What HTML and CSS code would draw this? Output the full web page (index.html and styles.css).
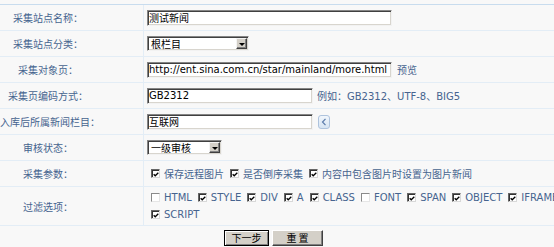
FILE: index.html
```html
<!DOCTYPE html>
<html lang="zh-CN">
<head>
<meta charset="utf-8">
<title>采集设置</title>
<link rel="stylesheet" href="styles.css">
</head>
<body>
<div class="form">
  <div class="row">
    <div class="label"><span>采集站点名称：</span></div>
    <div class="field"><input class="input w-long" type="text" value="测试新闻"></div>
  </div>
  <div class="row">
    <div class="label"><span>采集站点分类：</span></div>
    <div class="field"><span class="select w-sel1"><span class="sel-text">根栏目</span><span class="arrow"><span class="tri"></span></span></span></div>
  </div>
  <div class="row">
    <div class="label"><span>采集对象页：</span></div>
    <div class="field"><input class="input w-long" type="text" value="http://ent.sina.com.cn/star/mainland/more.html"><a class="link" href="#">预览</a></div>
  </div>
  <div class="row">
    <div class="label"><span>采集页编码方式：</span></div>
    <div class="field"><input class="input w-short" type="text" value="GB2312"><span class="hint">例如：GB2312、UTF-8、BIG5</span></div>
  </div>
  <div class="row">
    <div class="label"><span>入库后所属新闻栏目：</span></div>
    <div class="field"><input class="input w-short" type="text" value="互联网"><span class="back"><svg width="6" height="8" viewBox="0 0 6 8"><path d="M4.5 0.8 L1.5 4 L4.5 7.2" fill="none" stroke="#5b7bab" stroke-width="1.2"/></svg></span></div>
  </div>
  <div class="row">
    <div class="label"><span>审核状态：</span></div>
    <div class="field"><span class="select w-sel2"><span class="sel-text">一级审核</span><span class="arrow"><span class="tri"></span></span></span></div>
  </div>
  <div class="row">
    <div class="label"><span>采集参数：</span></div>
    <div class="field">
      <div class="checks">
        <span class="opt"><span class="cb on"><svg width="7" height="7" viewBox="0 0 7 7"><path d="M0.8 3.2 L2.6 5 L6.2 1.4" fill="none" stroke="#000" stroke-width="1.5"/></svg></span>保存远程图片</span>
        <span class="opt"><span class="cb on"><svg width="7" height="7" viewBox="0 0 7 7"><path d="M0.8 3.2 L2.6 5 L6.2 1.4" fill="none" stroke="#000" stroke-width="1.5"/></svg></span>是否倒序采集</span>
        <span class="opt"><span class="cb on"><svg width="7" height="7" viewBox="0 0 7 7"><path d="M0.8 3.2 L2.6 5 L6.2 1.4" fill="none" stroke="#000" stroke-width="1.5"/></svg></span>内容中包含图片时设置为图片新闻</span>
      </div>
    </div>
  </div>
  <div class="row row-tall">
    <div class="label"><span>过滤选项：</span></div>
    <div class="field">
      <div class="checks wrap">
        <span class="opt"><span class="cb"></span>HTML</span>
        <span class="opt"><span class="cb on"><svg width="7" height="7" viewBox="0 0 7 7"><path d="M0.8 3.2 L2.6 5 L6.2 1.4" fill="none" stroke="#000" stroke-width="1.5"/></svg></span>STYLE</span>
        <span class="opt"><span class="cb on"><svg width="7" height="7" viewBox="0 0 7 7"><path d="M0.8 3.2 L2.6 5 L6.2 1.4" fill="none" stroke="#000" stroke-width="1.5"/></svg></span>DIV</span>
        <span class="opt"><span class="cb on"><svg width="7" height="7" viewBox="0 0 7 7"><path d="M0.8 3.2 L2.6 5 L6.2 1.4" fill="none" stroke="#000" stroke-width="1.5"/></svg></span>A</span>
        <span class="opt"><span class="cb on"><svg width="7" height="7" viewBox="0 0 7 7"><path d="M0.8 3.2 L2.6 5 L6.2 1.4" fill="none" stroke="#000" stroke-width="1.5"/></svg></span>CLASS</span>
        <span class="opt"><span class="cb"></span>FONT</span>
        <span class="opt"><span class="cb on"><svg width="7" height="7" viewBox="0 0 7 7"><path d="M0.8 3.2 L2.6 5 L6.2 1.4" fill="none" stroke="#000" stroke-width="1.5"/></svg></span>SPAN</span>
        <span class="opt"><span class="cb on"><svg width="7" height="7" viewBox="0 0 7 7"><path d="M0.8 3.2 L2.6 5 L6.2 1.4" fill="none" stroke="#000" stroke-width="1.5"/></svg></span>OBJECT</span>
        <span class="opt"><span class="cb on"><svg width="7" height="7" viewBox="0 0 7 7"><path d="M0.8 3.2 L2.6 5 L6.2 1.4" fill="none" stroke="#000" stroke-width="1.5"/></svg></span>IFRAME</span>
        <span class="opt"><span class="cb on"><svg width="7" height="7" viewBox="0 0 7 7"><path d="M0.8 3.2 L2.6 5 L6.2 1.4" fill="none" stroke="#000" stroke-width="1.5"/></svg></span>SCRIPT</span>
      </div>
    </div>
  </div>
</div>
<div class="actions">
  <button class="btn btn-default w-next" type="button">下一步</button>
  <button class="btn w-reset" type="button">重 置</button>
</div>
</body>
</html>
```
FILE: styles.css
```css
html, body {
  margin: 0;
  padding: 0;
  overflow: hidden;
}
body {
  width: 554px;
  height: 247px;
  background: #f8f8f8;
  font-family: "DejaVu Sans", "Noto Sans CJK SC", sans-serif;
  font-size: 10px;
  color: #46648f;
}
.form {
  margin-top: 4px;
  border-top: 1px solid #c8dcee;
}
.row {
  display: grid;
  grid-template-columns: 144px minmax(0, 1fr);
  height: 25px;
  border-bottom: 1px solid #e3edf6;
}
.row-tall {
  height: 38px;
}
.label {
  border-right: 1px solid #e3edf6;
  padding-right: 47px;
  display: flex;
  align-items: center;
  white-space: nowrap;
}
.label span {
  display: block;
  width: 100%;
  text-align: center;
}
.field {
  display: flex;
  align-items: center;
  gap: 4px;
  padding-left: 3px;
  white-space: nowrap;
}
.input {
  box-sizing: border-box;
  height: 16px;
  margin: 0;
  padding: 0 1px;
  border: 1px solid;
  border-color: #858585 #f2f2f2 #f2f2f2 #858585;
  box-shadow: inset 1px 1px 0 #404040, inset -1px -1px 0 #d8d5ce;
  background: #fff;
  font: inherit;
  font-size: 10px;
  color: #000;
  outline: none;
}
.w-long { width: 245px; }
.w-short { width: 166px; }
.select {
  box-sizing: border-box;
  height: 15px;
  display: inline-flex;
  align-items: center;
  justify-content: space-between;
  padding: 0 1px 0 3px;
  border: 1px solid;
  border-color: #858585 #f2f2f2 #f2f2f2 #858585;
  box-shadow: inset 1px 1px 0 #404040, inset -1px -1px 0 #d8d5ce;
  background: #fff;
  color: #000;
}
.w-sel1 { width: 102px; }
.w-sel2 { width: 75px; }
.arrow {
  box-sizing: border-box;
  width: 11px;
  height: 11px;
  display: flex;
  align-items: center;
  justify-content: center;
  background: #d4d0c8;
  border: 1px solid;
  border-color: #f4f4f4 #404040 #404040 #f4f4f4;
  box-shadow: inset -1px -1px 0 #808080;
}
.tri {
  width: 0;
  height: 0;
  border-left: 3px solid transparent;
  border-right: 3px solid transparent;
  border-top: 3px solid #000;
  margin-top: 1px;
}
.link {
  color: #46648f;
  text-decoration: none;
  margin-left: 1px;
}
.back {
  box-sizing: border-box;
  width: 12px;
  height: 14px;
  margin-left: 1px;
  display: inline-flex;
  align-items: center;
  justify-content: center;
  border: 1px solid #aec3dd;
  border-radius: 3px;
  background: linear-gradient(#f1f6fc, #d6e4f3);
}
.checks {
  display: flex;
  flex-shrink: 0;
  align-items: center;
  column-gap: 6px;
  padding-left: 4px;
}
.checks.wrap {
  flex-wrap: wrap;
  width: 440px;
}
.opt {
  display: inline-flex;
  align-items: center;
  gap: 4px;
  height: 17px;
}
.cb {
  box-sizing: border-box;
  width: 9px;
  height: 9px;
  display: inline-flex;
  align-items: center;
  justify-content: center;
  background: #fff;
  border: 1px solid;
  border-color: #8a8a8a #e6e6e6 #e6e6e6 #8a8a8a;
}
.cb.on {
  border-color: #666 #d8d8d8 #d8d8d8 #666;
  box-shadow: inset 1px 1px 0 #333;
}
.cb svg {
  display: block;
  margin: 1px 0 0 1px;
}
.actions {
  display: flex;
  justify-content: center;
  gap: 3px;
  padding: 4px 7px 0 0;
}
.btn {
  box-sizing: border-box;
  height: 16px;
  margin: 0;
  padding: 0;
  font-family: "Noto Sans CJK SC", sans-serif;
  font-size: 10px;
  line-height: 12px;
  color: #000;
  background: #d4d0c8;
  border: 1px solid;
  border-color: #fff #404040 #404040 #fff;
  box-shadow: inset -1px -1px 0 #808080;
}
.btn-default {
  border-color: #000;
  box-shadow: inset 1px 1px 0 #fff, inset -1px -1px 0 #808080;
}
.w-next { width: 45px; }
.w-reset { width: 51px; }
```
